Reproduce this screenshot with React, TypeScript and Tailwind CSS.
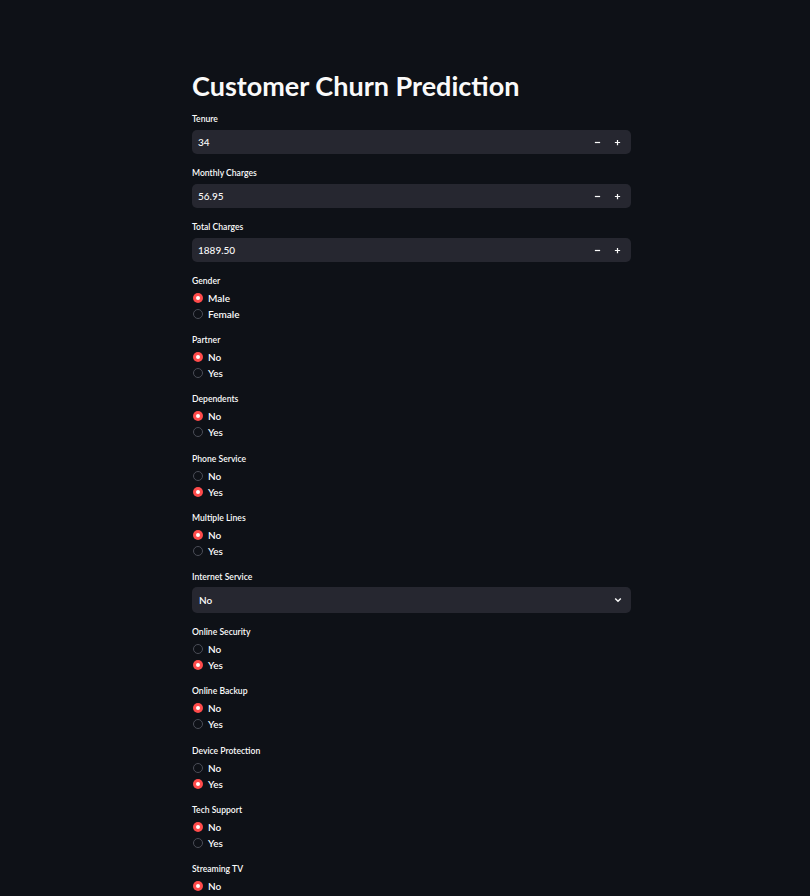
import React from "react";

const font = { fontFamily: 'Lato, "Noto Sans", sans-serif' };

function Label({ text }: { text: string }) {
  return <div className="h-[12px] leading-[12px] text-[8.6px] font-semibold text-[#fafafa]">{text}</div>;
}

function NumberInput({ label, value }: { label: string; value: string }) {
  return (
    <div className="flex flex-col">
      <Label text={label} />
      <div className="mt-[5px] h-[24px] rounded-[5px] bg-[#262730] flex items-center pl-[6px] pr-[4px]">
        <span className="flex-1 text-[10px] font-medium text-[#fafafa]">{value}</span>
        <span className="w-[20px] flex items-center justify-center">
          <svg width="7" height="7" viewBox="0 0 8 8"><path d="M1 4h6" stroke="#fafafa" strokeWidth="1.4" /></svg>
        </span>
        <span className="w-[20px] flex items-center justify-center">
          <svg width="7" height="7" viewBox="0 0 8 8"><path d="M1 4h6M4 1v6" stroke="#fafafa" strokeWidth="1.4" /></svg>
        </span>
      </div>
    </div>
  );
}

function Radio({ label, checked }: { label: string; checked: boolean }) {
  return (
    <div className="h-[16px] flex items-center gap-[5px] pl-[1px]">
      {checked ? (
        <span className="w-[10px] h-[10px] rounded-full bg-[#ff4b4b] flex items-center justify-center">
          <span className="w-[4px] h-[4px] rounded-full bg-white" />
        </span>
      ) : (
        <span className="w-[10px] h-[10px] rounded-full border-[1.5px] border-[#4a4d57] bg-[#0e1117]" />
      )}
      <span className="text-[10px] font-semibold text-[#fafafa] leading-[16px]">{label}</span>
    </div>
  );
}

function RadioGroup({ label, options, selected }: { label: string; options: string[]; selected: number }) {
  return (
    <div className="flex flex-col">
      <Label text={label} />
      <div className="mt-[3px] flex flex-col">
        {options.map((o, i) => (
          <Radio key={o} label={o} checked={i === selected} />
        ))}
      </div>
    </div>
  );
}

function Select({ label, value }: { label: string; value: string }) {
  return (
    <div className="flex flex-col">
      <Label text={label} />
      <div className="mt-[4px] h-[26px] rounded-[5px] bg-[#262730] flex items-center pl-[7px] pr-[9px]">
        <span className="flex-1 text-[10px] font-semibold text-[#fafafa]">{value}</span>
        <svg width="8" height="6" viewBox="0 0 8 6"><path d="M1.2 1.5L4 4.2L6.8 1.5" stroke="#fafafa" strokeWidth="1.5" fill="none" /></svg>
      </div>
    </div>
  );
}

export default function App() {
  const groups: [string, string[], number][] = [
    ["Gender", ["Male", "Female"], 0],
    ["Partner", ["No", "Yes"], 0],
    ["Dependents", ["No", "Yes"], 0],
    ["Phone Service", ["No", "Yes"], 1],
    ["Multiple Lines", ["No", "Yes"], 0],
  ];
  const groups2: [string, string[], number][] = [
    ["Online Security", ["No", "Yes"], 1],
    ["Online Backup", ["No", "Yes"], 0],
    ["Device Protection", ["No", "Yes"], 1],
    ["Tech Support", ["No", "Yes"], 0],
    ["Streaming TV", ["No", "Yes"], 0],
  ];
  return (
    <div className="w-[810px] h-[896px] overflow-hidden bg-[#0e1117]" style={font}>
      <div className="ml-[192px] w-[439px] pt-[69px] flex flex-col">
        <h1 className="h-[33px] leading-[33px] text-[27px] font-bold text-[#fafafa] mb-[11px]">Customer Churn Prediction</h1>
        <div className="flex flex-col gap-[13px]">
          <NumberInput label="Tenure" value="34" />
          <NumberInput label="Monthly Charges" value="56.95" />
          <NumberInput label="Total Charges" value="1889.50" />
        </div>
        <div className="mt-[12.5px] flex flex-col gap-[12.4px]">
          {groups.map(([l, o, s]) => (
            <RadioGroup key={l} label={l} options={o} selected={s} />
          ))}
          <Select label="Internet Service" value="No" />
          {groups2.map(([l, o, s]) => (
            <RadioGroup key={l} label={l} options={o} selected={s} />
          ))}
        </div>
      </div>
    </div>
  );
}
